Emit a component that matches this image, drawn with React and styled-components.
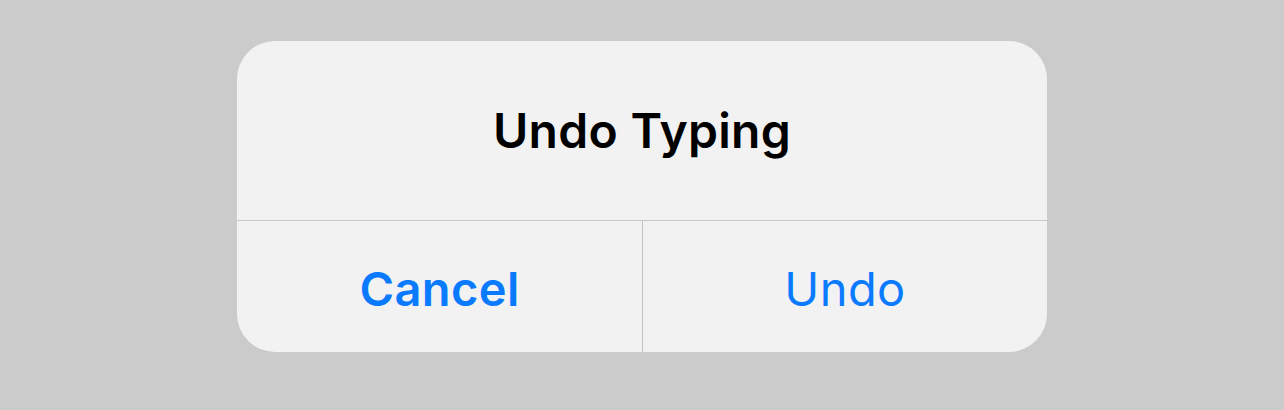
import React from 'react'
import styled, { createGlobalStyle } from 'styled-components'

const GlobalStyle = createGlobalStyle`
    html, body {
        margin: 0;
        padding: 0;
        background: #cbcbcb;
        font-family: Inter, "Noto Sans", sans-serif;
    }
`

const Page = styled.div`
    width: 1284px;
    height: 410px;
    display: flex;
    justify-content: center;
    padding-top: 41px;
    box-sizing: border-box;
`

const Dialog = styled.div`
    width: 810px;
    height: 311px;
    background: #f2f2f2;
    border-radius: 38px;
    overflow: hidden;
    display: flex;
    flex-direction: column;
`

const Title = styled.div`
    height: 180px;
    display: flex;
    align-items: center;
    justify-content: center;
    font-size: 48px;
    font-weight: 600;
    letter-spacing: 0.3px;
    color: #000;
    box-sizing: border-box;
    border-bottom: 1px solid #c8c8c8;
`

const Actions = styled.div`
    flex: 1;
    display: grid;
    grid-template-columns: 405px 1px 1fr;
`

const Divider = styled.div`
    background: #c2c2c2;
`

const Action = styled.button`
    border: none;
    background: transparent;
    font-family: inherit;
    font-size: 47px;
    font-weight: ${props => (props.$bold ? 600 : 400)};
    letter-spacing: 0.4px;
    color: #0a7aff;
    padding: 3px 0 0;
    cursor: pointer;
`

const App = () => {
    return (
        <>
            <GlobalStyle />
            <Page>
                <Dialog>
                    <Title>Undo Typing</Title>
                    <Actions>
                        <Action $bold>Cancel</Action>
                        <Divider />
                        <Action>Undo</Action>
                    </Actions>
                </Dialog>
            </Page>
        </>
    )
}

export default App
